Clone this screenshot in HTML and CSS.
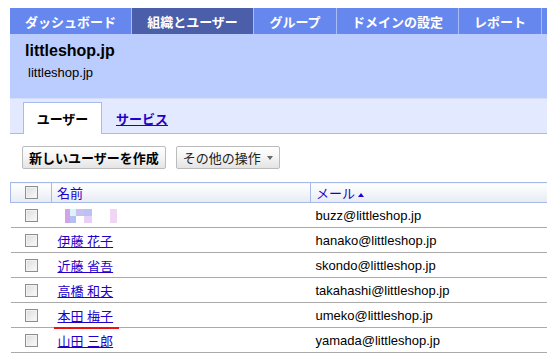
FILE: index.html
```html
<!DOCTYPE html>
<html lang="ja">
<head>
<meta charset="utf-8">
<link rel="stylesheet" href="styles.css">
</head>
<body>
<nav class="topnav">
  <a class="tab" style="width:121px">ダッシュボード</a>
  <a class="tab active" style="width:121px">組織とユーザー</a>
  <a class="tab" style="width:82px">グループ</a>
  <a class="tab" style="width:121px">ドメインの設定</a>
  <a class="tab" style="width:82px">レポート</a>
  <a class="tab" style="width:82px"></a>
</nav>
<header class="org">
  <h1 class="org-title">littleshop.jp</h1>
  <div class="org-sub">littleshop.jp</div>
</header>
<div class="subtabs">
  <span class="subtab current">ユーザー</span>
  <a class="subtab link">サービス</a>
</div>
<div class="toolbar">
  <button class="btn">新しいユーザーを作成</button>
  <button class="btn">その他の操作 <span class="caret"></span></button>
</div>
<table class="users">
  <thead>
    <tr>
      <th class="c-check"><span class="cb"></span></th>
      <th class="c-name"><a>名前</a></th>
      <th class="c-mail"><a>メール</a><span class="sort"></span></th>
    </tr>
  </thead>
  <tbody>
    <tr>
      <td class="c-check"><span class="cb"></span></td>
      <td class="c-name"><span class="pix">
        <i class="p1"></i><i class="p2"></i><i class="p3"></i><i class="p4"></i><i class="p0"></i><i class="p0"></i><i class="p0"></i><i class="p5"></i>
        <i class="p1"></i><i class="p6"></i><i class="p0"></i><i class="p7"></i><i class="p0"></i><i class="p0"></i><i class="p0"></i><i class="p5"></i>
      </span></td>
      <td class="c-mail">buzz@littleshop.jp</td>
    </tr>
    <tr>
      <td class="c-check"><span class="cb"></span></td>
      <td class="c-name"><a>伊藤 花子</a></td>
      <td class="c-mail">hanako@littleshop.jp</td>
    </tr>
    <tr>
      <td class="c-check"><span class="cb"></span></td>
      <td class="c-name"><a>近藤 省吾</a></td>
      <td class="c-mail">skondo@littleshop.jp</td>
    </tr>
    <tr>
      <td class="c-check"><span class="cb"></span></td>
      <td class="c-name"><a>高橋 和夫</a></td>
      <td class="c-mail">takahashi@littleshop.jp</td>
    </tr>
    <tr>
      <td class="c-check"><span class="cb"></span></td>
      <td class="c-name"><a class="marked">本田 梅子</a></td>
      <td class="c-mail">umeko@littleshop.jp</td>
    </tr>
    <tr>
      <td class="c-check"><span class="cb"></span></td>
      <td class="c-name"><a>山田 三郎</a></td>
      <td class="c-mail">yamada@littleshop.jp</td>
    </tr>
  </tbody>
</table>
</body>
</html>
```
FILE: styles.css
```css
html { overflow: hidden; }
body {
  margin: 8px 0 0 10px;
  width: 600px;
  font-family: "Liberation Sans", Arial, "Noto Sans CJK JP", sans-serif;
  font-size: 13px;
  color: #000;
  background: #fff;
}
.topnav {
  display: flex;
  height: 26px;
  gap: 1px;
  background: #a9bcf5;
}
.tab {
  flex: none;
  display: flex;
  align-items: center;
  justify-content: center;
  background: #6688ee;
  color: #fff;
  font-weight: bold;
  font-size: 13px;
  text-decoration: none;
}
.tab.active { background: #4a5ea9; }
.org {
  background: #bbcdfe;
  height: 64px;
  padding: 7px 0 0 15px;
  box-sizing: border-box;
}
.org-title {
  margin: 0;
  font-size: 16px;
  font-weight: bold;
  line-height: 20px;
}
.org-sub {
  margin: 4px 0 0 3px;
  font-size: 13px;
  line-height: 15px;
}
.subtabs {
  border-top: 1px solid #d5ddf8;
  background: #e3e9ff;
  height: 36px;
  box-sizing: border-box;
  padding: 5px 0 0 13px;
  display: flex;
  align-items: flex-end;
  border-bottom: 1px solid #a6baf0;
}
.subtab {
  font-weight: bold;
  font-size: 13px;
  height: 30px;
  display: flex;
  align-items: center;
}
.subtab.current {
  background: #fff;
  border: 1px solid #a6baf0;
  border-bottom: none;
  width: 77px;
  justify-content: center;
  margin-bottom: -1px;
  height: 31px;
}
.subtab.link {
  color: #2200cc;
  text-decoration: underline;
  margin-left: 14px;
}
.toolbar {
  display: flex;
  gap: 10px;
  padding: 12px 0 0 12px;
  height: 48px;
  box-sizing: border-box;
}
.btn {
  font: inherit;
  font-size: 13px;
  height: 23px;
  padding: 0 6px;
  border: 1px solid #bbbbbb;
  border-radius: 2px;
  background: linear-gradient(#ffffff, #f4f4f4 50%, #e4e4e4);
  color: #222;
  display: flex;
  align-items: center;
  gap: 4px;
}
.btn:first-child { font-weight: bold; color: #000; }
.caret {
  width: 0; height: 0;
  border-left: 3px solid transparent;
  border-right: 3px solid transparent;
  border-top: 4px solid #666;
  margin-left: 2px;
}
.users {
  border-collapse: collapse;
  width: 537px;
  table-layout: fixed;
}
.users th {
  height: 19px;
  padding: 0;
  text-align: left;
  font-weight: normal;
  border-top: 1px solid #a6baea;
  border-bottom: 1px solid #a6baea;
  background: linear-gradient(#ffffff, #e7ebf3);
}
.users th.c-check { border-left: 1px solid #a6baea; text-align: center; }
.users th.c-name, .users th.c-mail { border-left: 1px solid #a6baea; }
.users th a { color: #2200cc; }
.users th.c-name a { padding-left: 5px; }
.users th.c-mail a { padding-left: 5px; }
.sort {
  display: inline-block;
  width: 0; height: 0;
  border-left: 3px solid transparent;
  border-right: 3px solid transparent;
  border-bottom: 4px solid #2200cc;
  margin-left: 3px;
  vertical-align: 1px;
}
.c-check { width: 40px; text-align: center; }
.c-name { width: 258px; }
.users td {
  height: 24px;
  padding: 0;
  border-bottom: 1px solid #aaaaaa;
}
.users td.c-name { padding-left: 6px; }
.users td.c-mail { padding-left: 5px; }
.users td.c-name a { color: #2200cc; text-decoration: underline; }
.cb {
  display: inline-block;
  width: 11px; height: 11px;
  border: 1px solid #8e8e8e;
  background: linear-gradient(135deg, #dcdcdc, #fbfbfb);
  vertical-align: middle;
  margin-top: -2px;
  box-shadow: inset 0 0 0 1px #f2f2f2;
}
.marked {
  position: relative;
}
.marked::after {
  content: "";
  position: absolute;
  left: -4px;
  right: -6px;
  bottom: -5px;
  height: 2px;
  background: #ee1111;
}
.pix {
  display: inline-grid;
  grid-template-columns: 5px 6px 8px 8px 6px 6px 6px 7px;
  grid-auto-rows: 7px;
  margin-left: 7px;
  vertical-align: middle;
}
.pix i { display: block; }
.p0 { background: transparent; }
.p1 { background: #d3a2e8; }
.p2 { background: #d8f4fc; }
.p3 { background: #c9c0f0; }
.p4 { background: #b9c2f2; }
.p5 { background: #f0d6f4; }
.p6 { background: #b6c0f0; }
.p7 { background: #e8cff4; }
```
